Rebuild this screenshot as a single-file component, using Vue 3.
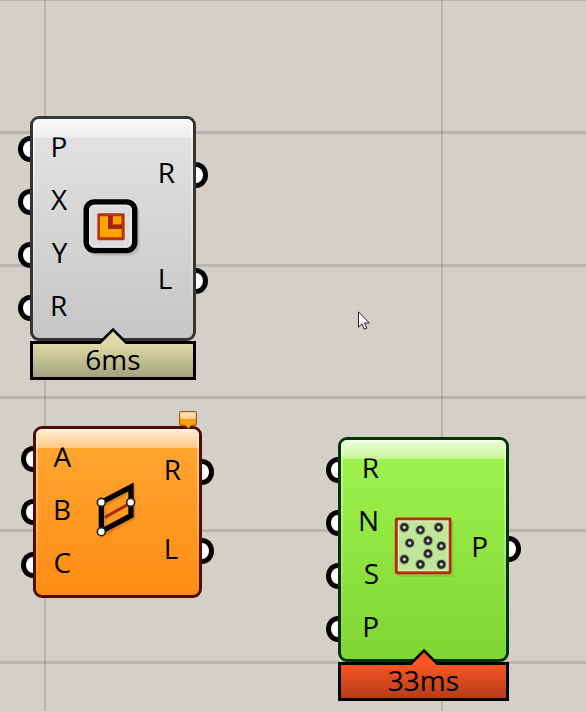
<script setup>
const columns = [44, 441]
const rows = [-2, 131, 264, 396, 529, 661]

const nodes = [
  { id: 'rectangle', tone: 'grey', inputs: ['P', 'X', 'Y', 'R'], outputs: ['R', 'L'], time: '6ms' },
  { id: 'three-point', tone: 'orange', inputs: ['A', 'B', 'C'], outputs: ['R', 'L'], warning: true },
  { id: 'populate', tone: 'green', inputs: ['R', 'N', 'S', 'P'], outputs: ['P'], time: '33ms' }
]

const dots = [
  [58, 53], [106, 61], [161, 53], [74, 100], [129, 93],
  [169, 109], [129, 132], [58, 149], [106, 164], [169, 164]
]
</script>

<template>
  <main class="canvas">
    <svg class="lines" aria-hidden="true">
      <rect v-for="x in columns" :key="'c' + x" :x="x" y="0" width="2" height="100%" />
      <rect v-for="y in rows" :key="'r' + y" x="0" :y="y" width="100%" height="3" />
    </svg>

    <article v-for="node in nodes" :key="node.id" class="node" :class="[node.tone, node.id]">
      <div class="body">
        <ul class="ports inputs">
          <li v-for="name in node.inputs" :key="name"><i class="grip"></i>{{ name }}</li>
        </ul>

        <svg v-if="node.id === 'rectangle'" class="icon" viewBox="26 19 180 180" aria-hidden="true">
          <rect x="40" y="42" width="156" height="156" rx="30" fill="#000" opacity=".1" />
          <rect x="36" y="37" width="145" height="145" rx="24" fill="#dcdcdc" stroke="#000" stroke-width="17" />
          <rect x="46" y="47" width="125" height="125" rx="14" fill="none" stroke="#ededed" stroke-width="4" />
          <rect x="69" y="71" width="82" height="81" rx="4" fill="#b63410" />
          <path d="M77 80H101V118H142V143H77Z" fill="#ffa500" />
          <path d="M101 78H113V106H142V118H101Z" fill="#a02408" />
          <rect x="116" y="80" width="25" height="24" rx="3" fill="#ffa500" />
        </svg>

        <svg v-else-if="node.id === 'three-point'" class="icon" viewBox="10 30 180 180" aria-hidden="true">
          <path d="M57 104L144 56V142L57 192Z" fill="none" stroke="#6b3000" stroke-width="16" opacity=".2" />
          <path d="M50 97L139 51V137L50 184Z" fill="none" stroke="#000" stroke-width="16" />
          <path d="M61 142L132 102" stroke="#a32b08" stroke-width="9" />
          <g fill="#fff" stroke="#222" stroke-width="5">
            <circle cx="50" cy="97" r="12" />
            <circle cx="138" cy="97" r="12" />
            <circle cx="50" cy="185" r="12" />
          </g>
        </svg>

        <svg v-else class="icon" viewBox="27 22 180 180" aria-hidden="true">
          <rect x="36" y="32" width="170" height="170" rx="4" fill="#1b4c00" opacity=".09" />
          <rect x="34" y="28" width="161" height="161" rx="2" fill="#c0e69c" stroke="#b32a0d" stroke-width="9" />
          <rect x="40" y="34" width="149" height="149" fill="none" stroke="#d9f1c2" stroke-width="3" />
          <g v-for="(dot, i) in dots" :key="i">
            <circle :cx="dot[0]" :cy="dot[1]" r="16" fill="#3c4f30" opacity=".25" />
            <circle :cx="dot[0]" :cy="dot[1]" r="9" fill="#d4ced4" stroke="#2b2d2b" stroke-width="8" />
          </g>
        </svg>

        <ul class="ports outputs">
          <li v-for="name in node.outputs" :key="name">{{ name }}<i class="grip"></i></li>
        </ul>
      </div>

      <div v-if="node.time" class="timing">
        <svg class="pointer" viewBox="0 0 30 17" aria-hidden="true">
          <path class="pointer-fill" d="M15 2.5L28 15.5V17H2V15.5Z" />
          <path d="M1.5 16L15 2.5L28.5 16" fill="none" stroke="#000" stroke-width="2.6" />
        </svg>
        {{ node.time }}
      </div>

      <svg v-if="node.warning" class="badge" viewBox="0 0 18 18" aria-hidden="true">
        <defs>
          <linearGradient id="balloon" x1="0" y1="0" x2="0" y2="1">
            <stop offset="0" stop-color="#fff0d8" />
            <stop offset=".42" stop-color="#ffcb80" />
            <stop offset=".46" stop-color="#f99c1d" />
            <stop offset="1" stop-color="#ffa800" />
          </linearGradient>
        </defs>
        <path d="M2.5 .6H15.5Q17.4 .6 17.4 2.5V12.5Q17.4 14.4 15.5 14.4H12L9.3 17.4L6.6 14.4H2.5Q.6 14.4 .6 12.5V2.5Q.6 .6 2.5 .6Z" fill="url(#balloon)" />
        <path d="M6.6 14.4H2.5Q.6 14.4 .6 12.5V2.5Q.6 .6 2.5 .6H15.5Q17.4 .6 17.4 2.5V12.5Q17.4 14.4 15.5 14.4H12" fill="none" stroke="#a0600c" stroke-width="1.2" />
      </svg>
    </article>

    <svg class="cursor" viewBox="0 0 12 19" aria-hidden="true">
      <path d="M.5 .8V16.2L4 12.8L6.3 18.2L8.8 17.2L6.5 12H11.3Z" fill="#fff" stroke="#222" stroke-width="1" />
    </svg>
  </main>
</template>

<style>
body {
  background: #d4d0c8;
}
</style>

<style scoped>
.canvas {
  position: relative;
  min-height: 100vh;
  overflow: hidden;
  background: #d4d0c8;
  color: #000;
  font: 28px/30px "Open Sans", "Noto Sans", sans-serif;
}

.lines {
  position: absolute;
  inset: 0;
  width: 100%;
  height: 100%;
  fill: rgba(0, 0, 0, 0.13);
}

.node {
  position: absolute;
}

.rectangle {
  left: 30px;
  top: 116px;
  width: 166px;
}

.three-point {
  left: 33px;
  top: 426px;
  width: 169px;
}

.populate {
  left: 338px;
  top: 437px;
  width: 171px;
}

.grey {
  --edge: #343634;
  --high: #e4e4e4;
  --low: #c6c6c6;
  --tag-high: #dcdba7;
  --tag-low: #a3a47f;
}

.orange {
  --edge: #500c00;
  --high: #ffa832;
  --low: #ff8c14;
}

.green {
  --edge: #023504;
  --high: #a0f54f;
  --low: #80d433;
  --tag-high: #f85622;
  --tag-low: #b63c19;
}

.body {
  position: relative;
  display: grid;
  grid-template-columns: 1fr 60px 1fr;
  align-items: center;
  padding: 3px 0 4px;
  border: 3px solid var(--edge);
  border-radius: 9px;
  background: linear-gradient(var(--high), var(--low)) padding-box;
}

.body::before,
.body::after {
  content: "";
  position: absolute;
  pointer-events: none;
}

.body::before {
  inset: 0;
  border: solid rgba(255, 255, 255, 0.5);
  border-width: 2px 2px 0;
  border-radius: 6px;
  mask-image: linear-gradient(#000, transparent);
}

.body::after {
  inset: 0 0 auto;
  height: 19px;
  border-radius: 6px 6px 0 0;
  background: linear-gradient(rgba(255, 255, 255, 0.8), rgba(255, 255, 255, 0.4));
}

.ports {
  display: flex;
  flex-direction: column;
  align-self: stretch;
  margin: 0;
  padding: 0;
  list-style: none;
}

.ports li {
  position: relative;
  display: flex;
  flex: 1;
  align-items: center;
  box-sizing: border-box;
  min-height: 53px;
  padding-bottom: 6px;
}

.inputs {
  justify-self: start;
}

.inputs li {
  justify-content: flex-end;
  padding-left: 17px;
}

.outputs {
  justify-self: end;
}

.outputs li {
  padding-right: 18px;
}

.grip {
  position: absolute;
  top: calc(50% - 13px);
  box-sizing: border-box;
  width: 12px;
  height: 26px;
  border: 5px solid #000;
  background: #fff;
}

.inputs .grip {
  left: -15px;
  border-right: 0;
  border-radius: 12px 0 0 12px / 13px 0 0 13px;
}

.outputs .grip {
  right: -15px;
  border-left: 0;
  border-radius: 0 12px 12px 0 / 0 13px 13px 0;
}

.icon {
  width: 60px;
  height: 60px;
  margin-bottom: 4px;
}

.timing {
  position: relative;
  padding-bottom: 3px;
  border: 3px solid #000;
  background: linear-gradient(var(--tag-high), var(--tag-low));
  text-align: center;
}

.pointer {
  position: absolute;
  left: calc(50% - 15px);
  top: -17px;
  width: 30px;
  height: 17px;
}

.pointer-fill {
  fill: var(--tag-high);
}

.badge {
  position: absolute;
  right: 5px;
  top: -15px;
  width: 18px;
  height: 18px;
}

.cursor {
  position: absolute;
  left: 358px;
  top: 311px;
  width: 12px;
  height: 19px;
}
</style>
